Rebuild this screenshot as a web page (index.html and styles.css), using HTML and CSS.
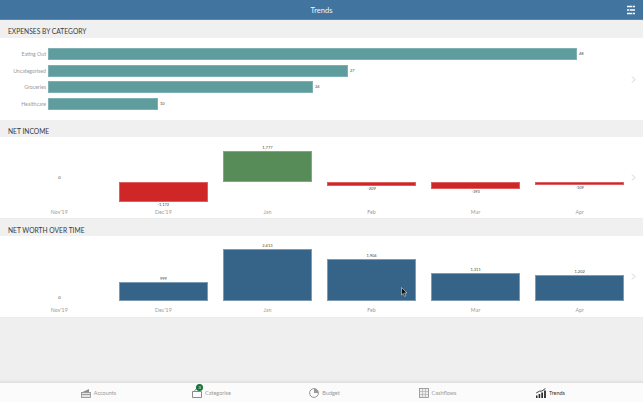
FILE: index.html
```html
<!DOCTYPE html>
<html lang="en">
<head>
  <meta charset="UTF-8" />
  <title>Trends</title>
  <link rel="stylesheet" href="styles.css">
</head>
<body>
  <header class="topbar">
    <span class="topbar-title">Trends</span>
    <svg class="topbar-filter" width="10" height="10" viewBox="0 0 10 10">
      <path d="M1 1.500h8M1 5h8M1 8.500h8" stroke="#fff" stroke-width="1.700" />
      <path d="M6.500 .5v2M3.500 4v2M6.500 7.500v2" stroke="#41749f" stroke-width=".7" />
    </svg>
  </header>

  <main class="content">
    <h2 class="section-head first">Expenses by category</h2>
    <section class="panel panel-cat">
      <div class="cat-list">
        <div class="cat-row">
          <span class="cat-name">Eating Out</span>
          <span class="cat-bar" style="width: 529px"></span>
          <span class="value">48</span>
        </div>
        <div class="cat-row">
          <span class="cat-name">Uncategorised</span>
          <span class="cat-bar" style="width: 300px"></span>
          <span class="value">27</span>
        </div>
        <div class="cat-row">
          <span class="cat-name">Groceries</span>
          <span class="cat-bar" style="width: 265px"></span>
          <span class="value">24</span>
        </div>
        <div class="cat-row">
          <span class="cat-name">Healthcare</span>
          <span class="cat-bar" style="width: 110px"></span>
          <span class="value">10</span>
        </div>
      </div>
      <svg class="chevron" width="5" height="7" viewBox="0 0 5 7"><path d="M1 .5l3 3-3 3" /></svg>
    </section>

    <h2 class="section-head">Net income</h2>
    <section class="panel">
      <div class="months months-income">
        <div class="month">
          <div class="above"><span class="value zero-above">0</span></div>
          <div class="below"></div>
          <span class="month-name">Nov'19</span>
        </div>
        <div class="month">
          <div class="above"></div>
          <div class="below">
            <div class="bar bar-red" style="height: 20px"></div>
            <span class="value">-1,172</span>
          </div>
          <span class="month-name">Dec'19</span>
        </div>
        <div class="month">
          <div class="above">
            <span class="value">1,777</span>
            <div class="bar bar-green" style="height: 31px"></div>
          </div>
          <div class="below"></div>
          <span class="month-name">Jan</span>
        </div>
        <div class="month">
          <div class="above"></div>
          <div class="below">
            <div class="bar bar-red" style="height: 4px"></div>
            <span class="value">-209</span>
          </div>
          <span class="month-name">Feb</span>
        </div>
        <div class="month">
          <div class="above"></div>
          <div class="below">
            <div class="bar bar-red" style="height: 7px"></div>
            <span class="value">-393</span>
          </div>
          <span class="month-name">Mar</span>
        </div>
        <div class="month">
          <div class="above"></div>
          <div class="below">
            <div class="bar bar-red" style="height: 3px"></div>
            <span class="value">-109</span>
          </div>
          <span class="month-name">Apr</span>
        </div>
      </div>
      <svg class="chevron" width="5" height="7" viewBox="0 0 5 7"><path d="M1 .5l3 3-3 3" /></svg>
    </section>

    <h2 class="section-head">Net worth over time</h2>
    <section class="panel">
      <div class="months months-worth">
        <div class="month">
          <div class="above"><span class="value">0</span></div>
          <span class="month-name">Nov'19</span>
        </div>
        <div class="month">
          <div class="above">
            <span class="value">999</span>
            <div class="bar bar-blue" style="height: 19px"></div>
          </div>
          <span class="month-name">Dec'19</span>
        </div>
        <div class="month">
          <div class="above">
            <span class="value">2,413</span>
            <div class="bar bar-blue" style="height: 52px"></div>
          </div>
          <span class="month-name">Jan</span>
        </div>
        <div class="month">
          <div class="above">
            <span class="value">1,904</span>
            <div class="bar bar-blue" style="height: 42px"></div>
          </div>
          <span class="month-name">Feb</span>
        </div>
        <div class="month">
          <div class="above">
            <span class="value">1,311</span>
            <div class="bar bar-blue" style="height: 28px"></div>
          </div>
          <span class="month-name">Mar</span>
        </div>
        <div class="month">
          <div class="above">
            <span class="value">1,202</span>
            <div class="bar bar-blue" style="height: 26px"></div>
          </div>
          <span class="month-name">Apr</span>
        </div>
      </div>
      <svg class="chevron" width="5" height="7" viewBox="0 0 5 7"><path d="M1 .5l3 3-3 3" /></svg>
    </section>
  </main>

  <nav class="tabbar">
    <div class="tab">
      <svg width="10" height="10" viewBox="0 0 10 10">
        <path d="M.5 4.500L8 1v3.500z" fill="#8d8d8d" />
        <rect x=".5" y="4.500" width="9" height="5" fill="#e4e4e4" stroke="#8d8d8d" stroke-width=".8" />
        <path d="M.5 6.500h9" stroke="#8d8d8d" stroke-width=".8" />
      </svg>
      <span>Accounts</span>
    </div>
    <div class="tab">
      <span class="tab-icon">
        <svg width="10" height="10" viewBox="0 0 10 10">
          <path d="M.5 3.500h9v6h-9z" fill="#fbfbfb" stroke="#7d7d7d" stroke-width=".9" />
          <path d="M2 3.500L4 1h3" fill="none" stroke="#7d7d7d" stroke-width=".8" />
        </svg>
        <span class="badge">3</span>
      </span>
      <span>Categorise</span>
    </div>
    <div class="tab">
      <svg width="10" height="10" viewBox="0 0 10 10">
        <circle cx="5" cy="5" r="4.400" fill="#fbfbfb" stroke="#7d7d7d" stroke-width=".8" />
        <path d="M5 5V.6A4.400 4.400 0 0 1 9.400 5z" fill="#9a9a9a" />
      </svg>
      <span>Budget</span>
    </div>
    <div class="tab">
      <svg width="10" height="10" viewBox="0 0 10 10">
        <rect x=".5" y=".5" width="9" height="9" fill="#eee" stroke="#8d8d8d" stroke-width=".8" />
        <path d="M3.500 1v8M6.500 1v8M1 3.500h8M1 6.500h8" stroke="#a8a8a8" stroke-width=".6" />
      </svg>
      <span>Cashflows</span>
    </div>
    <div class="tab tab-active">
      <svg width="10" height="10" viewBox="0 0 10 10">
        <path d="M0 7.500h1.500V10H0zM2.600 6h1.600v4H2.600zM5.300 4.500h1.700V10H5.300zM8.100 2.500h1.800V10H8.100z" fill="#2b2b2b" />
        <path d="M.2 5L3.500 3.200 6 3 9.500 .4" fill="none" stroke="#2b2b2b" stroke-width=".9" />
      </svg>
      <span>Trends</span>
    </div>
  </nav>

  <svg class="cursor" width="7" height="10" viewBox="0 0 7 10">
    <path d="M.5 .5v7.500l1.800-1.600 1.300 3 1.300-.6-1.300-2.900h2.400z" fill="#111" stroke="#fff" stroke-width=".5" />
  </svg>
</body>
</html>
```

FILE: styles.css
```css
* {
  box-sizing: border-box;
}

body {
  margin: 0;
  height: 402px;
  overflow: hidden;
  display: flex;
  flex-direction: column;
  position: relative;
  font-family: Lato, "Open Sans", sans-serif;
  background-color: #efefef;
}

.topbar {
  height: 20px;
  flex: none;
  padding-top: 1px;
  display: flex;
  align-items: center;
  justify-content: center;
  position: relative;
  background-color: #41749f;
  border-bottom: 1px solid #5c87ab;
}

.topbar-title {
  color: #f2f6fa;
  font-size: 7.500px;
}

.topbar-filter {
  position: absolute;
  right: 7px;
  top: 5px;
}

.content {
  flex: 1;
}

.section-head {
  margin: 0;
  height: 17px;
  padding: 4px 0 0 8px;
  display: flex;
  align-items: center;
  font-size: 6.700px;
  font-weight: 400;
  color: #3a3a3a;
  text-transform: uppercase;
  background-color: #f0f0f0;
}

.section-head.first {
  height: 18px;
}

.panel {
  height: 82px;
  display: flex;
  align-items: center;
  background-color: #fff;
  border-bottom: 1px solid #ececec;
}

.chevron {
  flex: none;
  margin-left: 3px;
  fill: none;
  stroke: #c4c4c4;
  stroke-width: 0.8;
}

/* horizontal bars */
.panel-cat {
  border-bottom: 0;
}

.cat-list {
  width: 628px;
  display: flex;
  flex-direction: column;
  gap: 4.500px;
}

.cat-row {
  display: flex;
  align-items: center;
  height: 12px;
}

.cat-name {
  width: 46px;
  text-align: right;
  margin-right: 2px;
  font-size: 5.200px;
  color: #999;
}

.cat-bar {
  height: 12px;
  margin-right: 2px;
  background-color: #5f9c9d;
  border: 1px solid #7fb1b2;
}

.value {
  font-size: 4px;
  line-height: 6px;
  color: #444;
}

/* month columns */
.months {
  width: 628px;
  padding-left: 15px;
  padding-right: 4px;
  display: grid;
  grid-template-columns: repeat(6, 1fr);
  column-gap: 15.500px;
}

.month {
  display: flex;
  flex-direction: column;
  align-items: stretch;
  text-align: center;
}

.above {
  display: flex;
  flex-direction: column;
  justify-content: flex-end;
}

.below {
  display: flex;
  flex-direction: column;
}

.months-income .above {
  height: 42px;
}

.months-income .below {
  height: 26px;
}

.months-income .zero-above {
  margin-bottom: 1px;
}

.months-worth .above {
  height: 62px;
}

.month-name {
  margin-top: 5px;
  font-size: 5.200px;
  line-height: 8px;
  letter-spacing: 0.1px;
  color: #999;
}

.months-income .month-name {
  margin-top: 0;
}

.bar {
  border: 1px solid transparent;
}

.bar-red {
  background-color: #cf2727;
  border-color: #dd5f5f;
}

.bar-green {
  background-color: #578b57;
  border-color: #7fa97f;
}

.bar-blue {
  background-color: #366488;
  border-color: #7c9cb6;
}

/* bottom tabs */
.tabbar {
  height: 20px;
  flex: none;
  padding: 0 36px 0 42px;
  display: grid;
  grid-template-columns: repeat(5, 1fr);
  background-color: #fbfbfb;
  border-top: 1px solid #e2e2e2;
  box-shadow: 0 -1px 2px #e0e0e0;
}

.tab {
  display: flex;
  align-items: center;
  justify-content: center;
  gap: 3px;
  font-size: 5.500px;
  color: #999;
}

.tab-active {
  color: #333;
}

.tab-icon {
  display: flex;
  position: relative;
}

.badge {
  position: absolute;
  top: -4px;
  left: 4px;
  width: 7px;
  height: 7px;
  border-radius: 50%;
  background-color: #16723a;
  color: #fff;
  font-size: 4.500px;
  line-height: 7px;
  text-align: center;
}

.cursor {
  position: absolute;
  left: 401px;
  top: 287px;
}
```
